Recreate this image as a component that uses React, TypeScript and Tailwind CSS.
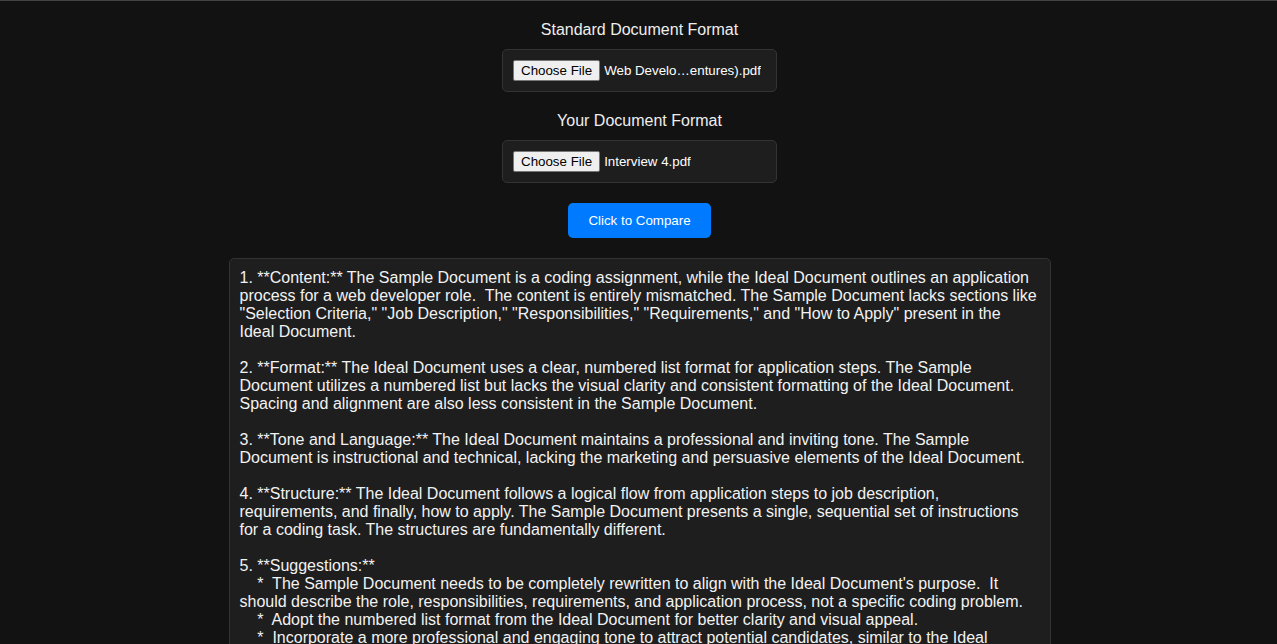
const result = `1. **Content:** The Sample Document is a coding assignment, while the Ideal Document outlines an application process for a web developer role.  The content is entirely mismatched. The Sample Document lacks sections like "Selection Criteria," "Job Description," "Responsibilities," "Requirements," and "How to Apply" present in the Ideal Document.

2. **Format:** The Ideal Document uses a clear, numbered list format for application steps. The Sample Document utilizes a numbered list but lacks the visual clarity and consistent formatting of the Ideal Document. Spacing and alignment are also less consistent in the Sample Document.

3. **Tone and Language:** The Ideal Document maintains a professional and inviting tone. The Sample Document is instructional and technical, lacking the marketing and persuasive elements of the Ideal Document.

4. **Structure:** The Ideal Document follows a logical flow from application steps to job description, requirements, and finally, how to apply. The Sample Document presents a single, sequential set of instructions for a coding task. The structures are fundamentally different.

5. **Suggestions:**
    *  The Sample Document needs to be completely rewritten to align with the Ideal Document's purpose.  It should describe the role, responsibilities, requirements, and application process, not a specific coding problem.
    *  Adopt the numbered list format from the Ideal Document for better clarity and visual appeal.
    *  Incorporate a more professional and engaging tone to attract potential candidates, similar to the Ideal Document.
    *  Restructure the content into clear sections such as role overview, requirements and how to apply.`;

function FilePicker({ fileName }: { fileName: string }) {
  return (
    <div className="flex h-[43px] w-[275px] items-center rounded-[5px] border border-[#333] bg-[#1e1e1e] px-[10px]">
      <button
        type="button"
        className="h-[21px] rounded-[2px] border border-[#767676] bg-[#efefef] px-[7px] text-[13.333px] leading-none text-black"
      >
        Choose File
      </button>
      <span className="ml-[4px] truncate text-[13.333px] text-white">{fileName}</span>
    </div>
  );
}

export default function App() {
  return (
    <div className="min-h-[644px] border-t border-[#444] bg-[#121212] font-['Liberation_Sans',Arial,sans-serif] text-[#eee]">
      <div className="flex flex-col items-center pl-[2px] pt-[20px]">
        <h3 className="mb-[10px] text-[16px] leading-[18px]">Standard Document Format</h3>
        <FilePicker fileName="Web Develo…entures).pdf" />
        <h3 className="mb-[10px] mt-[20px] text-[16px] leading-[18px]">Your Document Format</h3>
        <FilePicker fileName="Interview 4.pdf" />
        <button
          type="button"
          className="mt-[20px] h-[35px] w-[143px] rounded-[5px] bg-[#007bff] text-[13.333px] text-white"
        >
          Click to Compare
        </button>
        <div className="mt-[20px] w-[822px] whitespace-pre-wrap rounded-[5px] border border-[#333] bg-[#1e1e1e] px-[10px] pb-[10px] pt-[10px] text-[16px] leading-[18px] text-[#f2f2f2]">
          {result}
        </div>
      </div>
    </div>
  );
}
